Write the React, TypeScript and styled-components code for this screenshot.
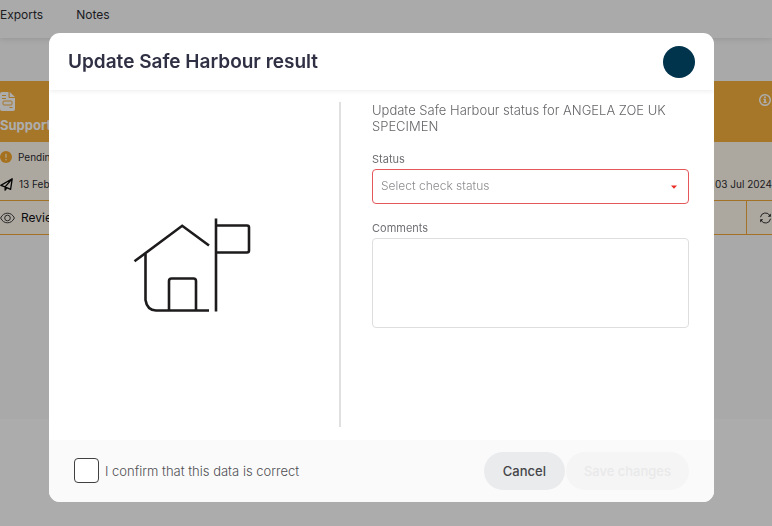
import React, { useState } from "react";
import styled, { createGlobalStyle } from "styled-components";

const GlobalStyle = createGlobalStyle`
  *, *::before, *::after { box-sizing: border-box; }
  body {
    margin: 0;
    background: #fefefe;
    color: #2b2b33;
    font-family: Inter, "Liberation Sans", sans-serif;
    font-size: 13px;
    overflow: hidden;
  }
  button, input, select, textarea { font: inherit; }
`;

const Page = styled.div`
  min-height: 100vh;
`;

const Nav = styled.nav`
  display: flex;
  gap: 33px;
  height: 38px;
  padding-top: 7px;
  background: #fbfbfb;
  box-shadow: 0 1px 6px rgba(0, 0, 0, 0.12);
  position: relative;
`;

const NavLink = styled.a`
  color: #2b2b33;
  font-size: 12px;
  line-height: 16px;
  text-decoration: none;
`;

const Content = styled.main`
  min-height: 381px;
  padding-top: 43px;
  background: #f9f9f9;
`;

const Card = styled.section`
  background: #fff8ea;
  border-bottom: 1px solid #f0a93a;
`;

const CardHead = styled.header`
  display: flex;
  justify-content: space-between;
  align-items: flex-start;
  height: 61px;
  padding-top: 11px;
  background: #f5af3d;
  color: #ffffff;
`;

const CardTitle = styled.h2`
  margin: 2px 0 0;
  font-size: 13px;
  font-weight: 700;
  line-height: 18px;
`;

const CardBody = styled.div`
  display: grid;
  gap: 11px;
  height: 58px;
  padding-top: 7px;
  align-content: start;
  font-size: 10px;
  line-height: 16px;
`;

const Line = styled.div`
  display: flex;
  align-items: center;
  gap: 6px;
`;

const Fill = styled.span`
  flex: 1;
`;

const CardActions = styled.div`
  display: flex;
  height: 34px;
  border-top: 1px solid #f0a93a;
`;

const CardAction = styled.button<{ $end?: boolean }>`
  display: flex;
  align-items: center;
  gap: 6px;
  flex: ${({ $end }) => ($end ? "none" : "1")};
  width: ${({ $end }) => ($end ? "26px" : "auto")};
  padding: 0;
  padding-left: ${({ $end }) => ($end ? "12px" : "0")};
  border: 0;
  border-left: ${({ $end }) => ($end ? "1px solid #f0a93a" : "0")};
  background: transparent;
  color: #111116;
  font-size: 12px;
  overflow: hidden;
`;

const Overlay = styled.div`
  position: fixed;
  inset: 0;
  padding: 33px 58px 24px 49px;
  background: rgba(0, 0, 0, 0.32);
  overflow: auto;
`;

const Dialog = styled.form`
  display: flex;
  flex-direction: column;
  min-height: 100%;
  border-radius: 11px;
  background: #ffffff;
  overflow: hidden;
`;

const DialogHead = styled.header`
  display: flex;
  align-items: center;
  justify-content: space-between;
  height: 57px;
  padding: 0 19px;
  box-shadow: 0 1px 5px rgba(0, 0, 0, 0.08);
`;

const DialogTitle = styled.h1`
  margin: 0;
  color: #303044;
  font-size: 19px;
  font-weight: 600;
  line-height: 24px;
`;

const CloseButton = styled.button`
  width: 32px;
  height: 32px;
  padding: 0;
  border: 0;
  border-radius: 50%;
  background: #00344d;
`;

const DialogBody = styled.div`
  flex: 1;
  display: grid;
  grid-template-columns: 73fr 87fr;
  padding: 12px 25px 13px 0;
`;

const Artwork = styled.div`
  display: flex;
  align-items: center;
  justify-content: center;
  padding-right: 4px;
  border-right: 2px solid #e0e0e0;
`;

const Fields = styled.div`
  display: flex;
  flex-direction: column;
  padding-left: 31px;
`;

const Intro = styled.p`
  margin: 0 0 17px;
  color: #66666a;
  font-weight: 300;
  line-height: 16px;
`;

const Label = styled.label`
  margin-bottom: 2px;
  color: #707074;
  font-size: 11px;
  line-height: 16px;
`;

const SelectBox = styled.div`
  display: grid;
  align-items: center;
  margin-bottom: 16px;

  > * { grid-area: 1 / 1; }
  > svg {
    justify-self: end;
    margin-right: 12px;
    pointer-events: none;
  }
`;

const Select = styled.select`
  width: 100%;
  height: 35px;
  padding: 0 30px 2px 8px;
  appearance: none;
  border: 1px solid #e4575a;
  border-radius: 4px;
  background: #ffffff;
  color: #8c8c90;
  font-size: 12px;
  font-weight: 300;
`;

const Comments = styled.textarea`
  height: 90px;
  padding: 8px;
  border: 1px solid #dedede;
  border-radius: 4px;
  background: #ffffff;
  resize: none;
`;

const DialogFoot = styled.footer`
  display: flex;
  align-items: center;
  justify-content: space-between;
  height: 62px;
  padding: 0 25px 1px;
  background: #fafafa;
`;

const Confirm = styled.label`
  display: flex;
  align-items: center;
  gap: 6px;
  color: #505054;
  font-weight: 300;
`;

const Check = styled.input`
  appearance: none;
  width: 25px;
  height: 25px;
  margin: 0;
  border: 1px solid #414144;
  border-radius: 4px;
  background: #ffffff;

  &:checked { background: #00344d; }
`;

const Buttons = styled.div`
  display: flex;
  gap: 1px;
`;

const PillButton = styled.button`
  min-width: 81px;
  height: 38px;
  padding: 0 18px;
  border: 0;
  border-radius: 19px;
  background: #e9ebed;
  color: #434548;
  font-weight: 500;

  &:disabled {
    background: #f5f5f5;
    color: #e9e9ea;
  }
`;

const FileIcon = () => (
  <svg width="15" height="19" viewBox="0 0 15 19" aria-hidden="true">
    <path fill="currentColor" d="M2 0h6.500v5q0 1 1 1H15v11q0 2-2 2H2q-2 0-2-2V2q0-2 2-2z" />
    <path fill="currentColor" d="M9.700 0L15 5H9.700z" />
    <path fill="none" stroke="#f5af3d" d="M2 3.500h4M2 6.500h4M9.500 15.500h3" />
    <rect x="3" y="9" width="9" height="4" rx="1" fill="none" stroke="#f5af3d" />
  </svg>
);

const InfoIcon = () => (
  <svg width="14" height="14" viewBox="0 0 14 14" aria-hidden="true">
    <circle cx="7" cy="8" r="5.3" fill="none" stroke="currentColor" strokeWidth="1.5" />
    <circle cx="7" cy="5.3" r="1" fill="currentColor" />
    <path d="M5.400 6.800h2.500v3h.8v1.200H5.300V9.800h.8V8h-.7z" fill="currentColor" />
  </svg>
);

const AlertIcon = () => (
  <svg width="12" height="12" viewBox="0 0 12 12" aria-hidden="true">
    <circle cx="6" cy="6" r="6" fill="#f5a72e" />
    <path d="M6 2.7v4" stroke="#fff1cf" strokeWidth="1.3" />
    <circle cx="6" cy="8.8" r=".8" fill="#fff1cf" />
  </svg>
);

const PlaneIcon = () => (
  <svg width="13" height="13" viewBox="0 0 13 13" fill="none" stroke="#08080a" strokeWidth="1.3" strokeLinejoin="round" aria-hidden="true">
    <path d="M.8 7.4L12.2.8l-1.6 10.5-5.5-2.4zM5.1 8.9v3.3l1.8-2.4M5.1 8.9L12.2.8" />
  </svg>
);

const EyeIcon = () => (
  <svg width="15" height="12" viewBox="0 0 15 12" fill="none" stroke="#3a3a3e" aria-hidden="true">
    <path d="M.6 6Q3 1.2 7.5 1.2T14.4 6Q12 10.8 7.5 10.8T.6 6z" />
    <circle cx="7.5" cy="6" r="2.8" />
  </svg>
);

const SyncIcon = () => (
  <svg width="14" height="14" viewBox="0 0 14 14" fill="none" stroke="#222226" aria-hidden="true">
    <path d="M1.600 6.200A5.400 5.400 0 0 1 11.800 4.600M12.400 7.800A5.400 5.400 0 0 1 2.200 9.400" />
    <path d="M12.700 2.200v3.400H9.500zM1.300 11.800V8.400h3.200z" fill="#222226" stroke="none" />
  </svg>
);

const HouseIcon = () => (
  <svg width="118" height="96" viewBox="0 0 118 96" fill="none" stroke="#1d1b1c" strokeWidth="2.6" aria-hidden="true">
    <path d="M1.5 44.3L49.2 8.800 76 28.500" />
    <path d="M12.5 37V83q1.500 10 10.500 10.500H76" />
    <path d="M36 94V64q0-2.500 2.500-2.500h22q2.500 0 2.500 2.500V94" />
    <path d="M83 1.500v93M83 8.500h31q2 0 2 2v23q0 2-2 2H83" />
  </svg>
);

const CaretIcon = () => (
  <svg width="6" height="4" viewBox="0 0 6 4" aria-hidden="true">
    <path d="M0 .5h6L3 3.800z" fill="#e92c25" />
  </svg>
);

export default function App() {
  const [confirmed, setConfirmed] = useState(false);
  const [status, setStatus] = useState("");

  return (
    <>
      <GlobalStyle />
      <Page>
        <Nav>
          <NavLink href="#exports">Exports</NavLink>
          <NavLink href="#notes">Notes</NavLink>
        </Nav>
        <Content>
          <Card>
            <CardHead>
              <div>
                <FileIcon />
                <CardTitle>Support</CardTitle>
              </div>
              <InfoIcon />
            </CardHead>
            <CardBody>
              <Line><AlertIcon /><span>Pending</span></Line>
              <Line>
                <PlaneIcon />
                <span>13 Feb</span>
                <Fill />
                <span>03 Jul 2024</span>
              </Line>
            </CardBody>
            <CardActions>
              <CardAction type="button"><EyeIcon />Review</CardAction>
              <CardAction type="button" $end aria-label="Refresh"><SyncIcon /></CardAction>
            </CardActions>
          </Card>
        </Content>
      </Page>
      <Overlay>
        <Dialog role="dialog" aria-labelledby="dialog-title" onSubmit={(e) => e.preventDefault()}>
          <DialogHead>
            <DialogTitle id="dialog-title">Update Safe Harbour result</DialogTitle>
            <CloseButton type="button" aria-label="Close" />
          </DialogHead>
          <DialogBody>
            <Artwork><HouseIcon /></Artwork>
            <Fields>
              <Intro>Update Safe Harbour status for ANGELA ZOE UK SPECIMEN</Intro>
              <Label htmlFor="status">Status</Label>
              <SelectBox>
                <Select id="status" value={status} onChange={(e) => setStatus(e.target.value)}>
                  <option value="">Select check status</option>
                </Select>
                <CaretIcon />
              </SelectBox>
              <Label htmlFor="comments">Comments</Label>
              <Comments id="comments" />
            </Fields>
          </DialogBody>
          <DialogFoot>
            <Confirm>
              <Check type="checkbox" checked={confirmed} onChange={(e) => setConfirmed(e.target.checked)} />
              I confirm that this data is correct
            </Confirm>
            <Buttons>
              <PillButton type="button">Cancel</PillButton>
              <PillButton type="submit" disabled={!confirmed || !status}>Save changes</PillButton>
            </Buttons>
          </DialogFoot>
        </Dialog>
      </Overlay>
    </>
  );
}
